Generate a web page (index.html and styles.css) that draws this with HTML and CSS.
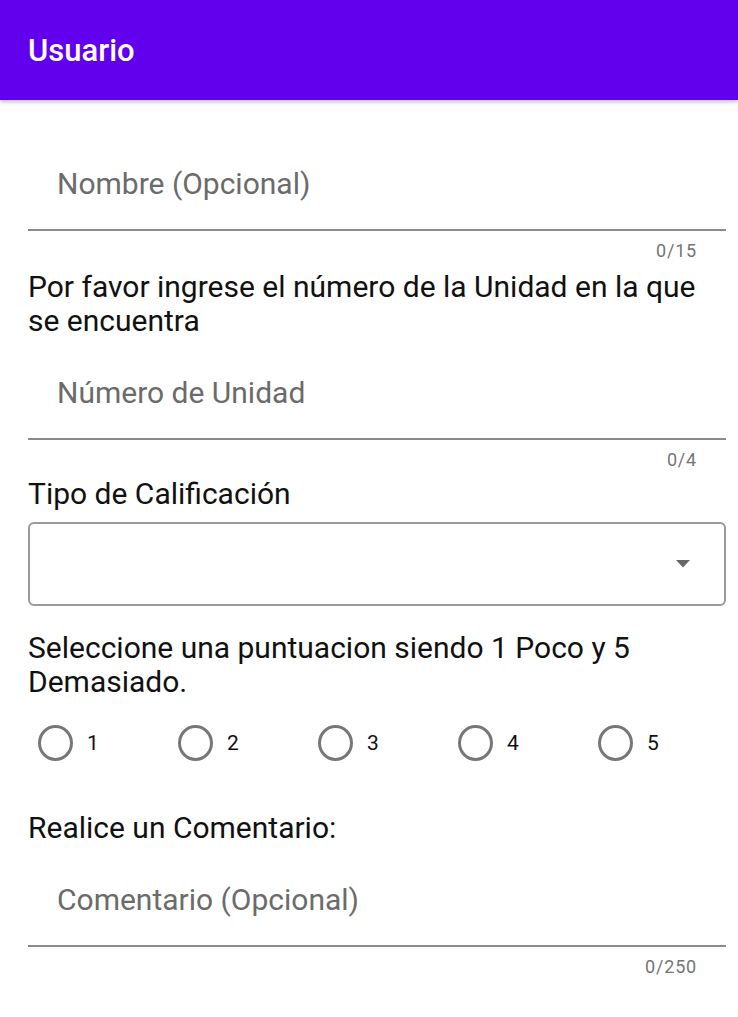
FILE: index.html
```html
<!DOCTYPE html>
<html lang="es">
<head>
<meta charset="utf-8">
<title>Usuario</title>
<link rel="stylesheet" href="styles.css">
</head>
<body>
<header class="appbar"><h1 class="appbar-title">Usuario</h1></header>
<main class="content">
  <div class="field field-first"><span class="placeholder">Nombre (Opcional)</span></div>
  <div class="counter">0/15</div>
  <p class="label">Por favor ingrese el número de la Unidad en la que se encuentra</p>
  <div class="field field-gap"><span class="placeholder">Número de Unidad</span></div>
  <div class="counter">0/4</div>
  <p class="label label-tipo">Tipo de Calificación</p>
  <div class="select">
    <svg class="arrow" width="14" height="8" viewBox="0 0 14 8"><path d="M0 0 H14 L7 7.5 Z" fill="#666"/></svg>
  </div>
  <p class="label label-sel">Seleccione una puntuacion siendo 1 Poco y 5 Demasiado.</p>
  <div class="radios">
    <div class="radio"><span class="circle"></span><span class="rlabel">1</span></div>
    <div class="radio"><span class="circle"></span><span class="rlabel">2</span></div>
    <div class="radio"><span class="circle"></span><span class="rlabel">3</span></div>
    <div class="radio"><span class="circle"></span><span class="rlabel">4</span></div>
    <div class="radio"><span class="circle"></span><span class="rlabel">5</span></div>
  </div>
  <p class="label label-com">Realice un Comentario:</p>
  <div class="field field-gap"><span class="placeholder">Comentario (Opcional)</span></div>
  <div class="counter">0/250</div>
</main>
</body>
</html>
```
FILE: styles.css
```css
html, body {
  margin: 0;
  padding: 0;
  background: #ffffff;
  font-family: Roboto, "Noto Sans", sans-serif;
}
.appbar {
  height: 100px;
  background: #6200ee;
  display: flex;
  align-items: center;
  padding-left: 28px;
  box-shadow: 0 2px 4px rgba(0, 0, 0, 0.25);
  position: relative;
}
.appbar-title {
  margin: 0;
  color: #ffffff;
  font-size: 31px;
  font-weight: 500;
  line-height: 36px;
  padding-top: 2px;
}
.content {
  padding: 0 12px 0 28px;
}
.field {
  border-bottom: 2px solid #8a8a8a;
  padding-bottom: 27px;
}
.field-first { margin-top: 66px; }
.field-gap { margin-top: 37px; }
.placeholder {
  display: block;
  padding-left: 29px;
  font-size: 30px;
  line-height: 36px;
  color: #6b6b6b;
}
.counter {
  margin-top: 9px;
  text-align: right;
  padding-right: 29px;
  font-size: 18px;
  line-height: 22px;
  color: #757575;
  letter-spacing: 0.8px;
}
.label {
  margin: 8px 0 0;
  font-size: 30px;
  line-height: 34px;
  color: #111111;
}
.label-tipo { margin-top: 6px; }
.label-sel { margin-top: 25px; }
.label-com { margin-top: 50px; }
.select {
  margin-top: 11px;
  height: 80px;
  border: 2px solid #9a9a9a;
  border-radius: 6px;
  display: flex;
  align-items: center;
  justify-content: flex-end;
  padding-right: 34px;
}
.arrow { display: block; }
.radios {
  margin-top: 26px;
  display: grid;
  grid-template-columns: repeat(5, 140px);
}
.radio {
  display: flex;
  align-items: center;
  gap: 14px;
  padding-left: 10px;
  height: 36px;
}
.circle {
  width: 29px;
  height: 30px;
  border: 3px solid #777777;
  border-radius: 50%;
  box-sizing: content-box;
}
.rlabel {
  font-size: 21px;
  color: #111111;
}
```
